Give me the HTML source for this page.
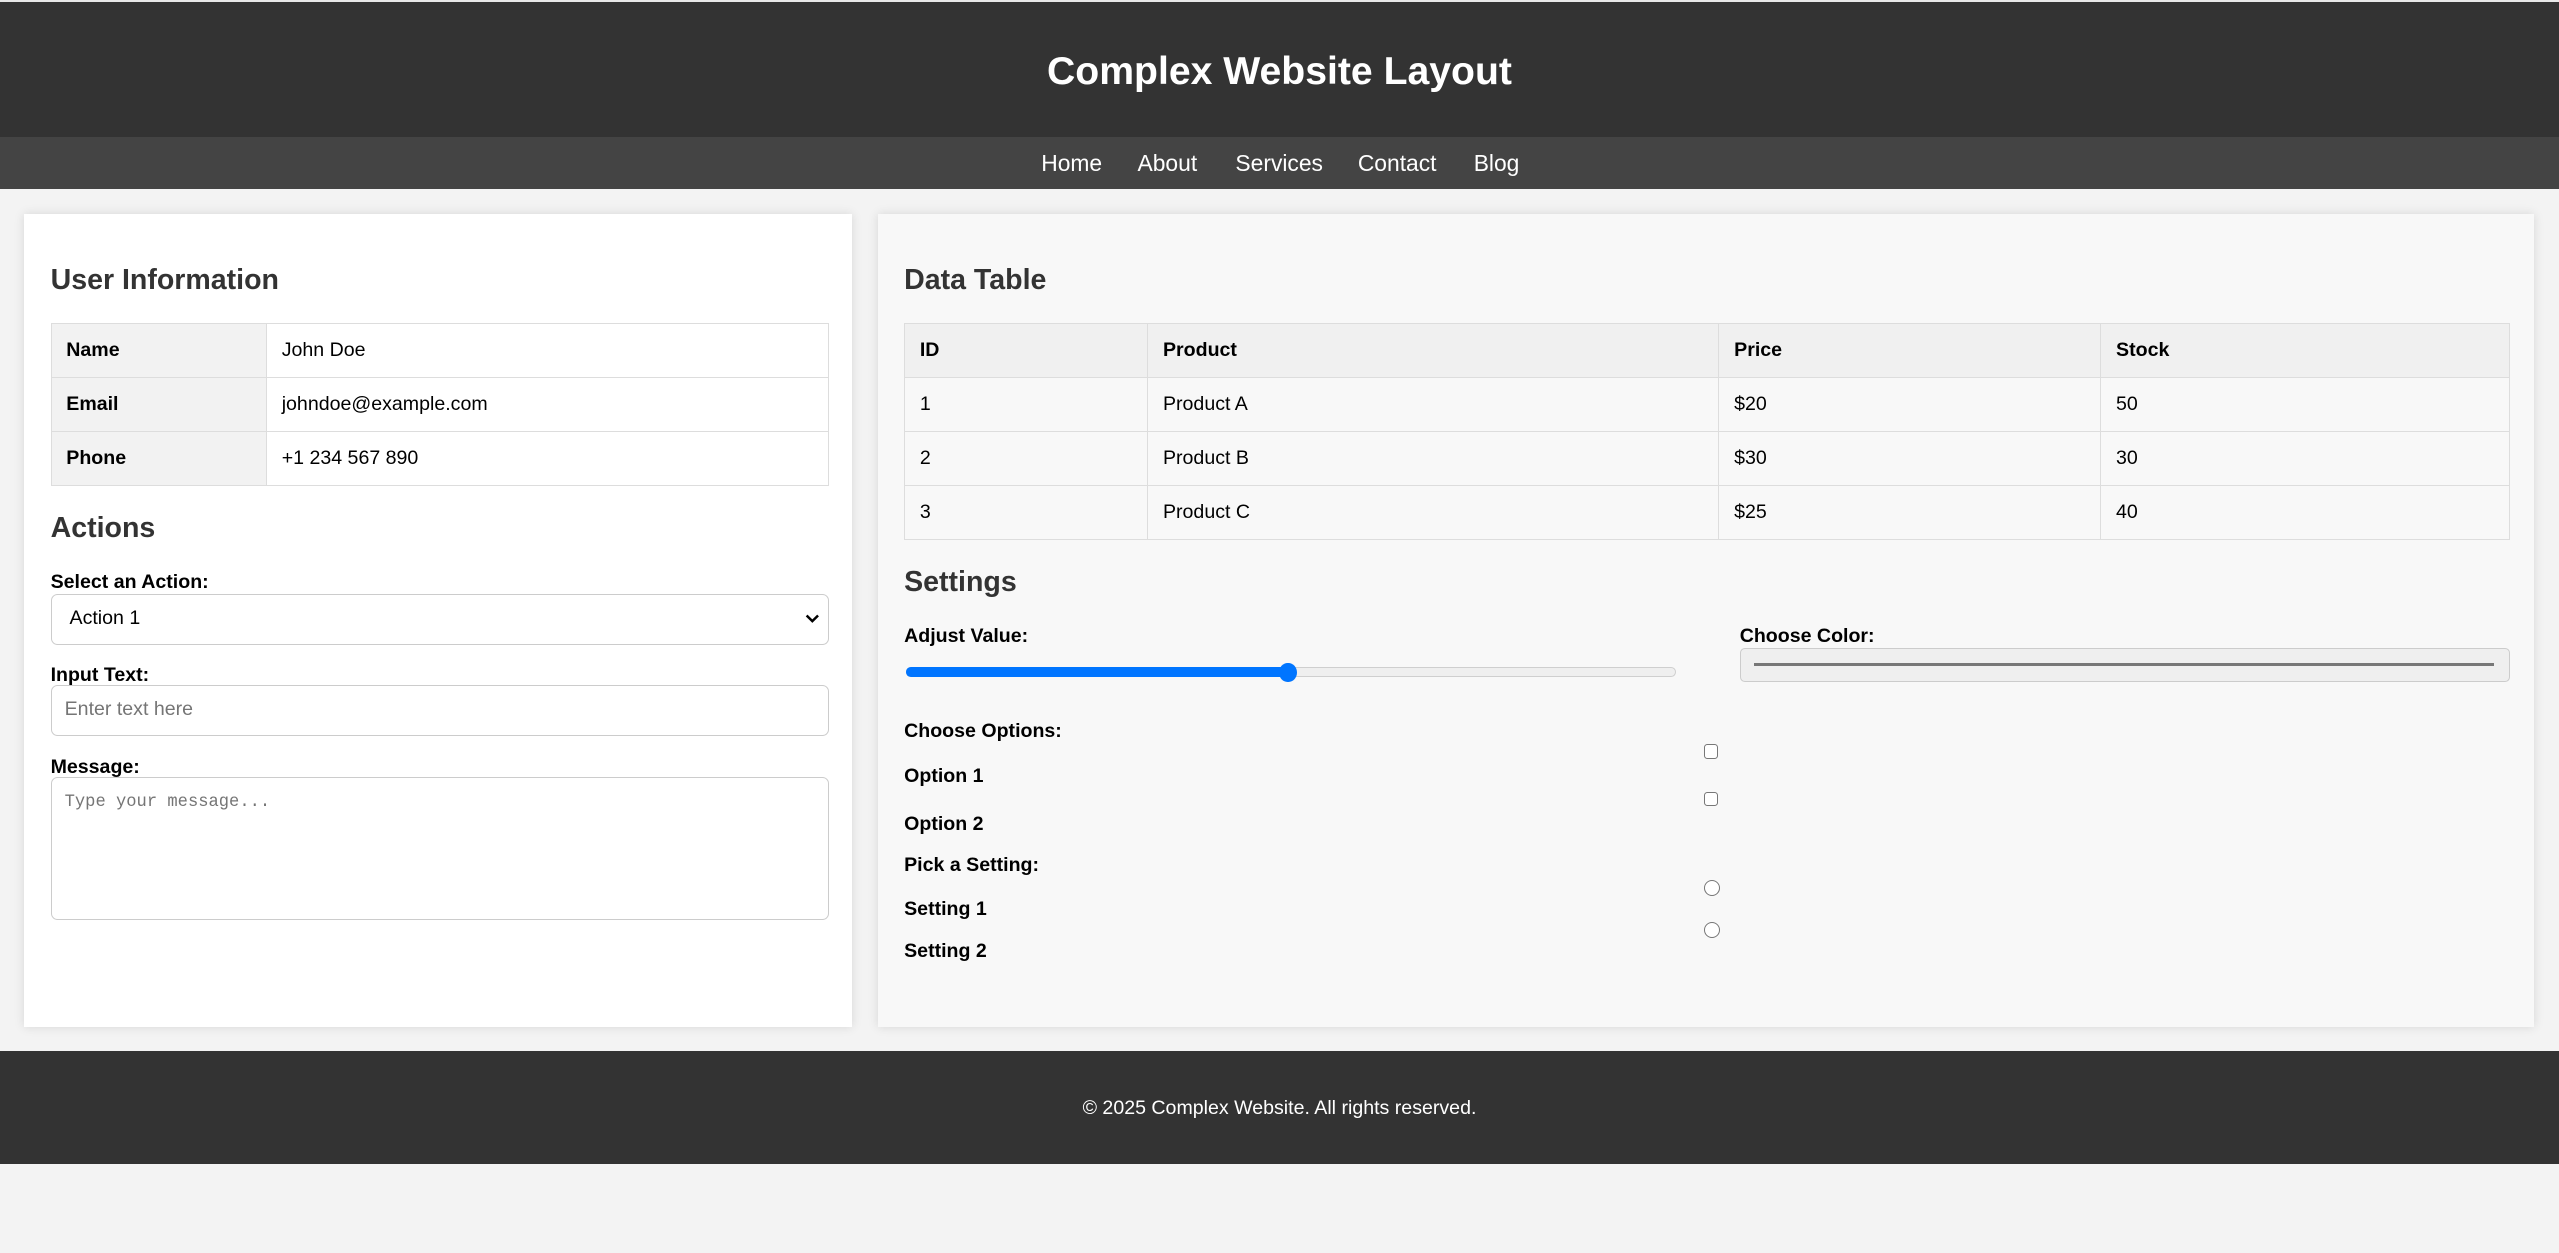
<!DOCTYPE html>
<html><head><meta charset="utf-8">
<style>
html,body{margin:0;padding:0;}
body{width:2559px;height:1253px;overflow:hidden;background:#f3f3f3;font-family:"Liberation Sans",Arial,sans-serif;position:relative;}
#z{zoom:1.632;position:absolute;left:0;top:0;width:1568px;height:768px;}
.a{position:absolute;}
.hdr{left:0;top:1px;width:1568px;height:83px;background:#333;}
.h1{left:0;width:1568px;top:30px;text-align:center;color:#fff;font-weight:bold;font-size:24px;line-height:28px;}
.nav{left:0;top:84px;width:1568px;height:32px;background:#444;}
.nav span{position:absolute;top:8px;color:#fff;font-size:14px;line-height:16px;}
.card{box-shadow:0 0 6px rgba(0,0,0,0.12);}
.h2{font-size:17.5px;font-weight:bold;color:#333;line-height:20px;}
table{border-collapse:collapse;font-size:12px;position:absolute;}
td{border:1px solid #ddd;height:33px;padding:0 0 0 9px;box-sizing:border-box;color:#000;}
.lb{font-size:12px;font-weight:bold;color:#000;line-height:14px;}
.box{border:1px solid #ccc;border-radius:4px;background:#fff;box-sizing:border-box;}
.cb{width:9px;height:9px;border:1px solid #777;border-radius:2px;box-sizing:border-box;background:#fff;}
.rd{width:10px;height:10px;border:1px solid #777;border-radius:50%;box-sizing:border-box;background:#fff;}
</style></head><body><div id="z">
<div class="a" style="left:0;top:0;width:1568px;height:1px;background:#e8e8e8"></div>
<div class="a hdr"></div>
<div class="a h1">Complex Website Layout</div>
<div class="a nav">
<span style="left:638px">Home</span><span style="left:697px">About</span><span style="left:757px">Services</span><span style="left:832px">Contact</span><span style="left:903px">Blog</span>
</div>

<div class="a card" style="left:15px;top:131px;width:507px;height:498px;background:#fff"></div>
<div class="a h2" style="left:31px;top:162px">User Information</div>
<table style="left:31px;top:198px;width:477px">
<tr><td style="width:132px;background:#f2f2f2;font-weight:bold">Name</td><td>John Doe</td></tr>
<tr><td style="background:#f2f2f2;font-weight:bold">Email</td><td>johndoe@example.com</td></tr>
<tr><td style="background:#f2f2f2;font-weight:bold">Phone</td><td>+1 234 567 890</td></tr>
</table>
<div class="a h2" style="left:31px;top:314px">Actions</div>
<div class="a lb" style="left:31px;top:350px">Select an Action:</div>
<div class="a box" style="left:31px;top:364px;width:477px;height:31px;font-size:12px;line-height:29px;padding-left:11px">Action 1
<svg class="a" style="right:5px;top:11px" width="9" height="7" viewBox="0 0 9 7"><path d="M1 1.5 L4.5 5 L8 1.5" stroke="#000" stroke-width="1.5" fill="none"/></svg></div>
<div class="a lb" style="left:31px;top:407px">Input Text:</div>
<div class="a box" style="left:31px;top:420px;width:477px;height:31px;font-size:12px;line-height:29px;padding-left:8px;color:#757575">Enter text here</div>
<div class="a lb" style="left:31px;top:463px">Message:</div>
<div class="a box" style="left:31px;top:476px;width:477px;height:88px;font-family:'Liberation Mono',monospace;font-size:10.5px;color:#757575;padding:9px 8px">Type your message...</div>

<div class="a card" style="left:538px;top:131px;width:1015px;height:498px;background:#f8f8f8"></div>
<div class="a h2" style="left:554px;top:162px">Data Table</div>
<table style="left:554px;top:198px;width:984px">
<tr style="background:#f0f0f0;font-weight:bold"><td style="width:149px">ID</td><td style="width:350px">Product</td><td style="width:234px">Price</td><td>Stock</td></tr>
<tr><td>1</td><td>Product A</td><td>$20</td><td>50</td></tr>
<tr><td>2</td><td>Product B</td><td>$30</td><td>30</td></tr>
<tr><td>3</td><td>Product C</td><td>$25</td><td>40</td></tr>
</table>
<div class="a h2" style="left:554px;top:347px">Settings</div>
<div class="a lb" style="left:554px;top:383px">Adjust Value:</div>
<div class="a" style="left:555px;top:409px;width:472px;height:6px;border-radius:3px;background:#efefef;border:1px solid #cfcfcf;box-sizing:border-box"></div>
<div class="a" style="left:555px;top:409px;width:236px;height:6px;border-radius:3px;background:#0075ff"></div>
<div class="a" style="left:784px;top:406px;width:11px;height:12px;border-radius:50%;background:#0075ff"></div>
<div class="a lb" style="left:1066px;top:383px">Choose Color:</div>
<div class="a" style="left:1066px;top:397px;width:472px;height:21px;background:#efefef;border:1px solid #ccc;border-radius:3px;box-sizing:border-box"></div>
<div class="a" style="left:1075px;top:406px;width:453px;height:2px;background:#777"></div>
<div class="a lb" style="left:554px;top:441px">Choose Options:</div>
<div class="a lb" style="left:554px;top:469px">Option 1</div>
<div class="a lb" style="left:554px;top:498px">Option 2</div>
<div class="a cb" style="left:1044px;top:456px"></div>
<div class="a cb" style="left:1044px;top:485px"></div>
<div class="a lb" style="left:554px;top:523px">Pick a Setting:</div>
<div class="a lb" style="left:554px;top:550px">Setting 1</div>
<div class="a lb" style="left:554px;top:576px">Setting 2</div>
<div class="a rd" style="left:1044px;top:539px"></div>
<div class="a rd" style="left:1044px;top:565px"></div>

<div class="a" style="left:0;top:644px;width:1568px;height:69px;background:#333"></div>
<div class="a" style="left:0;top:672px;width:1568px;text-align:center;color:#fff;font-size:12px;line-height:14px">© 2025 Complex Website. All rights reserved.</div>
<div class="a" style="left:0;top:712px;font-size:11px;line-height:12px;color:#000;font-weight:bold">
